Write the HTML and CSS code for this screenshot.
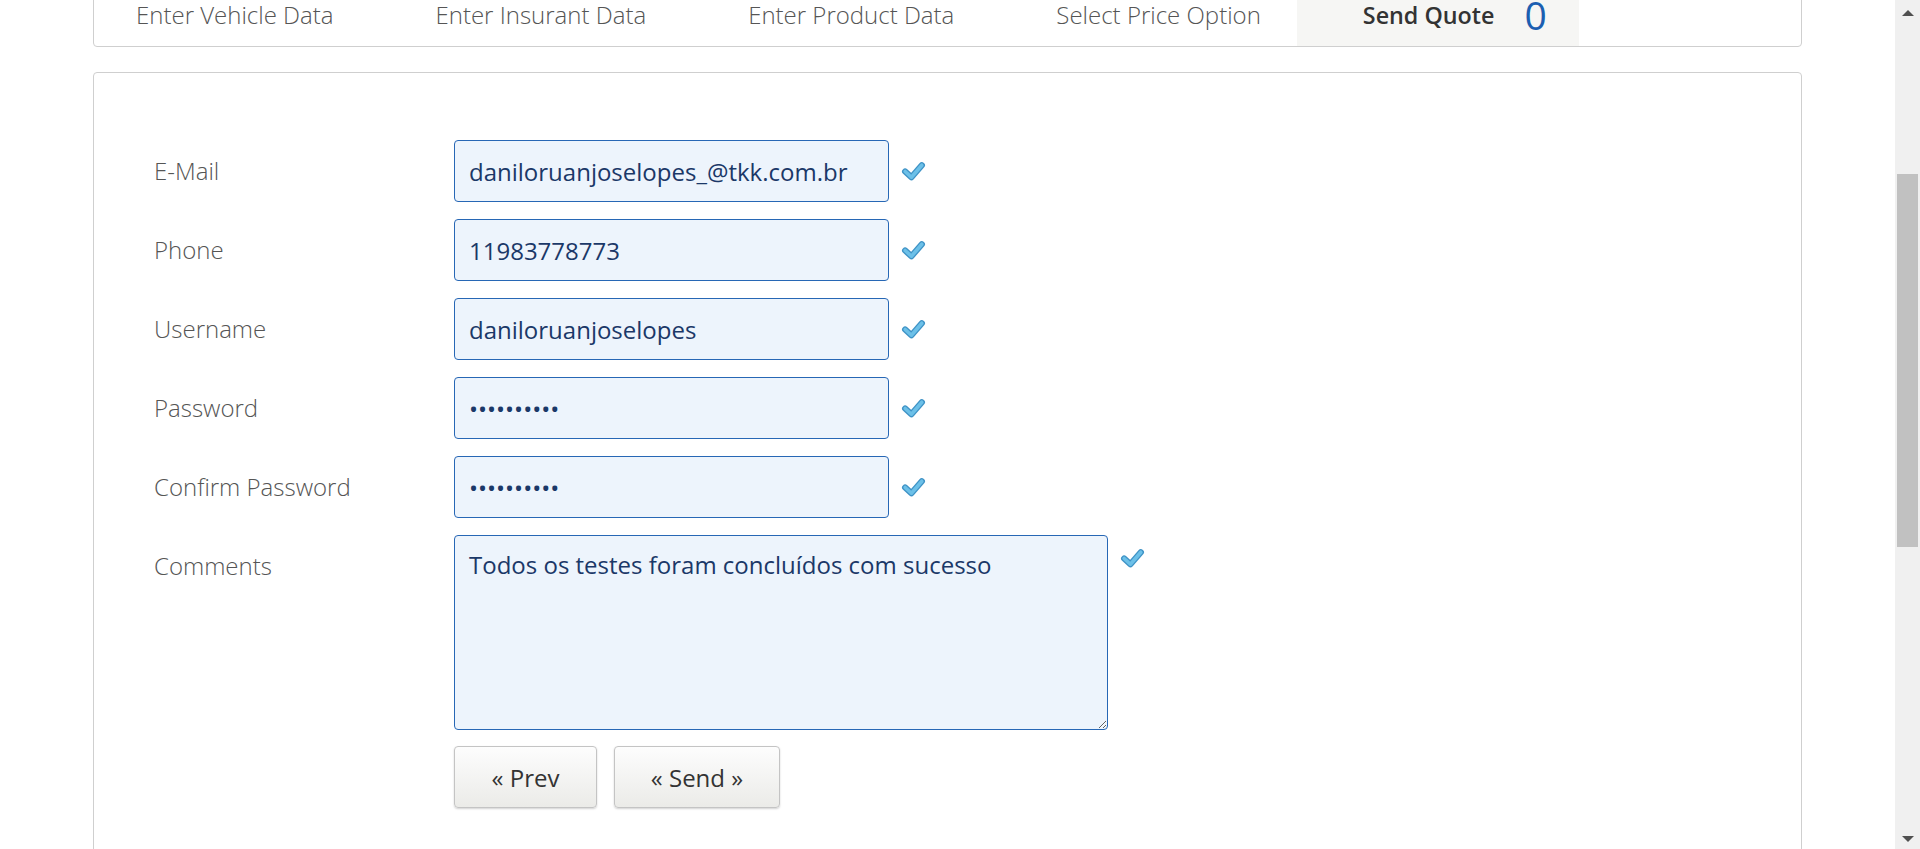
FILE: index.html
```html
<!DOCTYPE html>
<html lang="en">
<head>
<meta charset="utf-8">
<title>Send Quote</title>
<link rel="stylesheet" href="styles.css">
</head>
<body>
<div class="viewport">
  <div class="page">
    <nav class="steps">
      <ul class="steps-list">
        <li class="step"><a>Enter Vehicle Data</a></li>
        <li class="step"><a>Enter Insurant Data</a></li>
        <li class="step"><a>Enter Product Data</a></li>
        <li class="step"><a>Select Price Option</a></li>
        <li class="step active"><a>Send Quote<span class="counter">0</span></a></li>
      </ul>
    </nav>
    <form class="card">
      <div class="row">
        <label class="label" for="email">E-Mail</label>
        <input class="field" id="email" type="text" value="daniloruanjoselopes_@tkk.com.br">
        <span class="check"><svg viewBox="0 0 24 20" width="25" height="21"><path d="M4 10 L10 15.5 L20 4" class="check-out"/><path d="M4 10 L10 15.5 L20 4" class="check-in"/></svg></span>
      </div>
      <div class="row">
        <label class="label" for="phone">Phone</label>
        <input class="field" id="phone" type="text" value="11983778773">
        <span class="check"><svg viewBox="0 0 24 20" width="25" height="21"><path d="M4 10 L10 15.5 L20 4" class="check-out"/><path d="M4 10 L10 15.5 L20 4" class="check-in"/></svg></span>
      </div>
      <div class="row">
        <label class="label" for="username">Username</label>
        <input class="field" id="username" type="text" value="daniloruanjoselopes">
        <span class="check"><svg viewBox="0 0 24 20" width="25" height="21"><path d="M4 10 L10 15.5 L20 4" class="check-out"/><path d="M4 10 L10 15.5 L20 4" class="check-in"/></svg></span>
      </div>
      <div class="row">
        <label class="label" for="password">Password</label>
        <input class="field" id="password" type="password" value="0123456789">
        <span class="check"><svg viewBox="0 0 24 20" width="25" height="21"><path d="M4 10 L10 15.5 L20 4" class="check-out"/><path d="M4 10 L10 15.5 L20 4" class="check-in"/></svg></span>
      </div>
      <div class="row">
        <label class="label" for="confirm">Confirm Password</label>
        <input class="field" id="confirm" type="password" value="0123456789">
        <span class="check"><svg viewBox="0 0 24 20" width="25" height="21"><path d="M4 10 L10 15.5 L20 4" class="check-out"/><path d="M4 10 L10 15.5 L20 4" class="check-in"/></svg></span>
      </div>
      <div class="row row-area">
        <label class="label" for="comments">Comments</label>
        <div class="area-wrap">
          <textarea class="area" id="comments">Todos os testes foram concluídos com sucesso</textarea>
        </div>
        <span class="check check-area"><svg viewBox="0 0 24 20" width="25" height="21"><path d="M4 10 L10 15.5 L20 4" class="check-out"/><path d="M4 10 L10 15.5 L20 4" class="check-in"/></svg></span>
      </div>
      <div class="buttons">
        <button type="button" class="btn btn-prev">« Prev</button>
        <button type="button" class="btn btn-send">« Send »</button>
      </div>
    </form>
  </div>
  <div class="scrollbar">
    <span class="arrow arrow-up"></span>
    <div class="track"><div class="thumb"></div></div>
    <span class="arrow arrow-down"></span>
  </div>
</div>
</body>
</html>
```
FILE: styles.css
```css
* { box-sizing: border-box; }
html, body {
  margin: 0;
  padding: 0;
  height: 849px;
  overflow: hidden;
  background: #fff;
  font-family: "Open Sans", "Liberation Sans", sans-serif;
}
.viewport {
  display: flex;
  height: 849px;
}
.page {
  flex: 1;
  overflow: hidden;
}
.steps {
  width: 1709px;
  margin: -15px auto 0;
  border: 1px solid #cfcfcf;
  border-radius: 4px;
  background: #fff;
}
.steps-list {
  list-style: none;
  margin: 0 0 0 -24px;
  padding: 0;
  display: flex;
}
.step a {
  display: block;
  height: 60px;
  line-height: 28px;
  padding: 15px 36px 0 66px;
  font-size: 24px;
  font-weight: 300;
  color: #555;
  white-space: nowrap;
}
.step.active a {
  background: #f6f6f4;
  font-weight: 600;
  font-size: 23.3px;
  color: #333;
  padding-right: 32px;
}
.counter {
  display: inline-block;
  margin-left: 30px;
  font-size: 39px;
  line-height: 28px;
  font-weight: 400;
  color: #1c5fb1;
  vertical-align: top;
}
.card {
  width: 1709px;
  margin: 25px auto 0;
  border: 1px solid #cfcfcf;
  border-radius: 4px;
  padding: 67px 60px 200px;
}
.row {
  display: flex;
  align-items: flex-start;
  margin-bottom: 17px;
}
.row-area {
  margin-bottom: 16px;
}
.label {
  width: 300px;
  flex: none;
  line-height: 62px;
  font-size: 24px;
  font-weight: 300;
  color: #555;
}
.field, .area {
  flex: none;
  width: 435px;
  height: 62px;
  border: 1px solid #2767b5;
  border-radius: 4px;
  background: #edf4fc;
  color: #1b3868;
  font-family: "Open Sans", "Liberation Sans", sans-serif;
  font-size: 24px;
  padding: 0 14px;
  margin: 0;
  outline: none;
}
.area-wrap {
  display: flex;
  flex: none;
}
.area {
  display: block;
  width: 654px;
  height: 195px;
  padding: 10px 14px;
  line-height: 38px;
  resize: both;
  caret-color: #1b3868;
}
.check {
  display: flex;
  align-items: center;
  height: 62px;
  margin-left: 12px;
}
.check-area {
  height: 46px;
}
.check-out {
  fill: none;
  stroke: #3f93c6;
  stroke-width: 6;
  stroke-linecap: round;
  stroke-linejoin: round;
}
.check-in {
  fill: none;
  stroke: #6cc0e8;
  stroke-width: 3.4;
  stroke-linecap: round;
  stroke-linejoin: round;
}
.buttons {
  display: flex;
  gap: 17px;
  margin-left: 300px;
}
.btn {
  height: 62px;
  border: 1px solid #c4c4c4;
  border-radius: 4px;
  background: linear-gradient(#fdfdfd, #ebebe8);
  box-shadow: 0 1px 2px rgba(0,0,0,0.18);
  font-family: "Open Sans", "Liberation Sans", sans-serif;
  font-size: 24px;
  color: #333;
  padding: 0;
}
.btn-prev { width: 143px; }
.btn-send { width: 166px; }
.scrollbar {
  width: 25px;
  flex: none;
  background: #f0f0f0;
  display: flex;
  flex-direction: column;
  align-items: center;
}
.arrow {
  width: 0;
  height: 0;
  border-left: 6px solid transparent;
  border-right: 6px solid transparent;
  flex: none;
}
.arrow-up {
  border-bottom: 6px solid #505050;
  margin-top: 10px;
}
.arrow-down {
  border-top: 6px solid #505050;
  margin-bottom: 7px;
}
.track {
  flex: 1;
  width: 100%;
  padding: 158px 2px 0;
}
.thumb {
  height: 373px;
  background: #c1c1c1;
}
```
